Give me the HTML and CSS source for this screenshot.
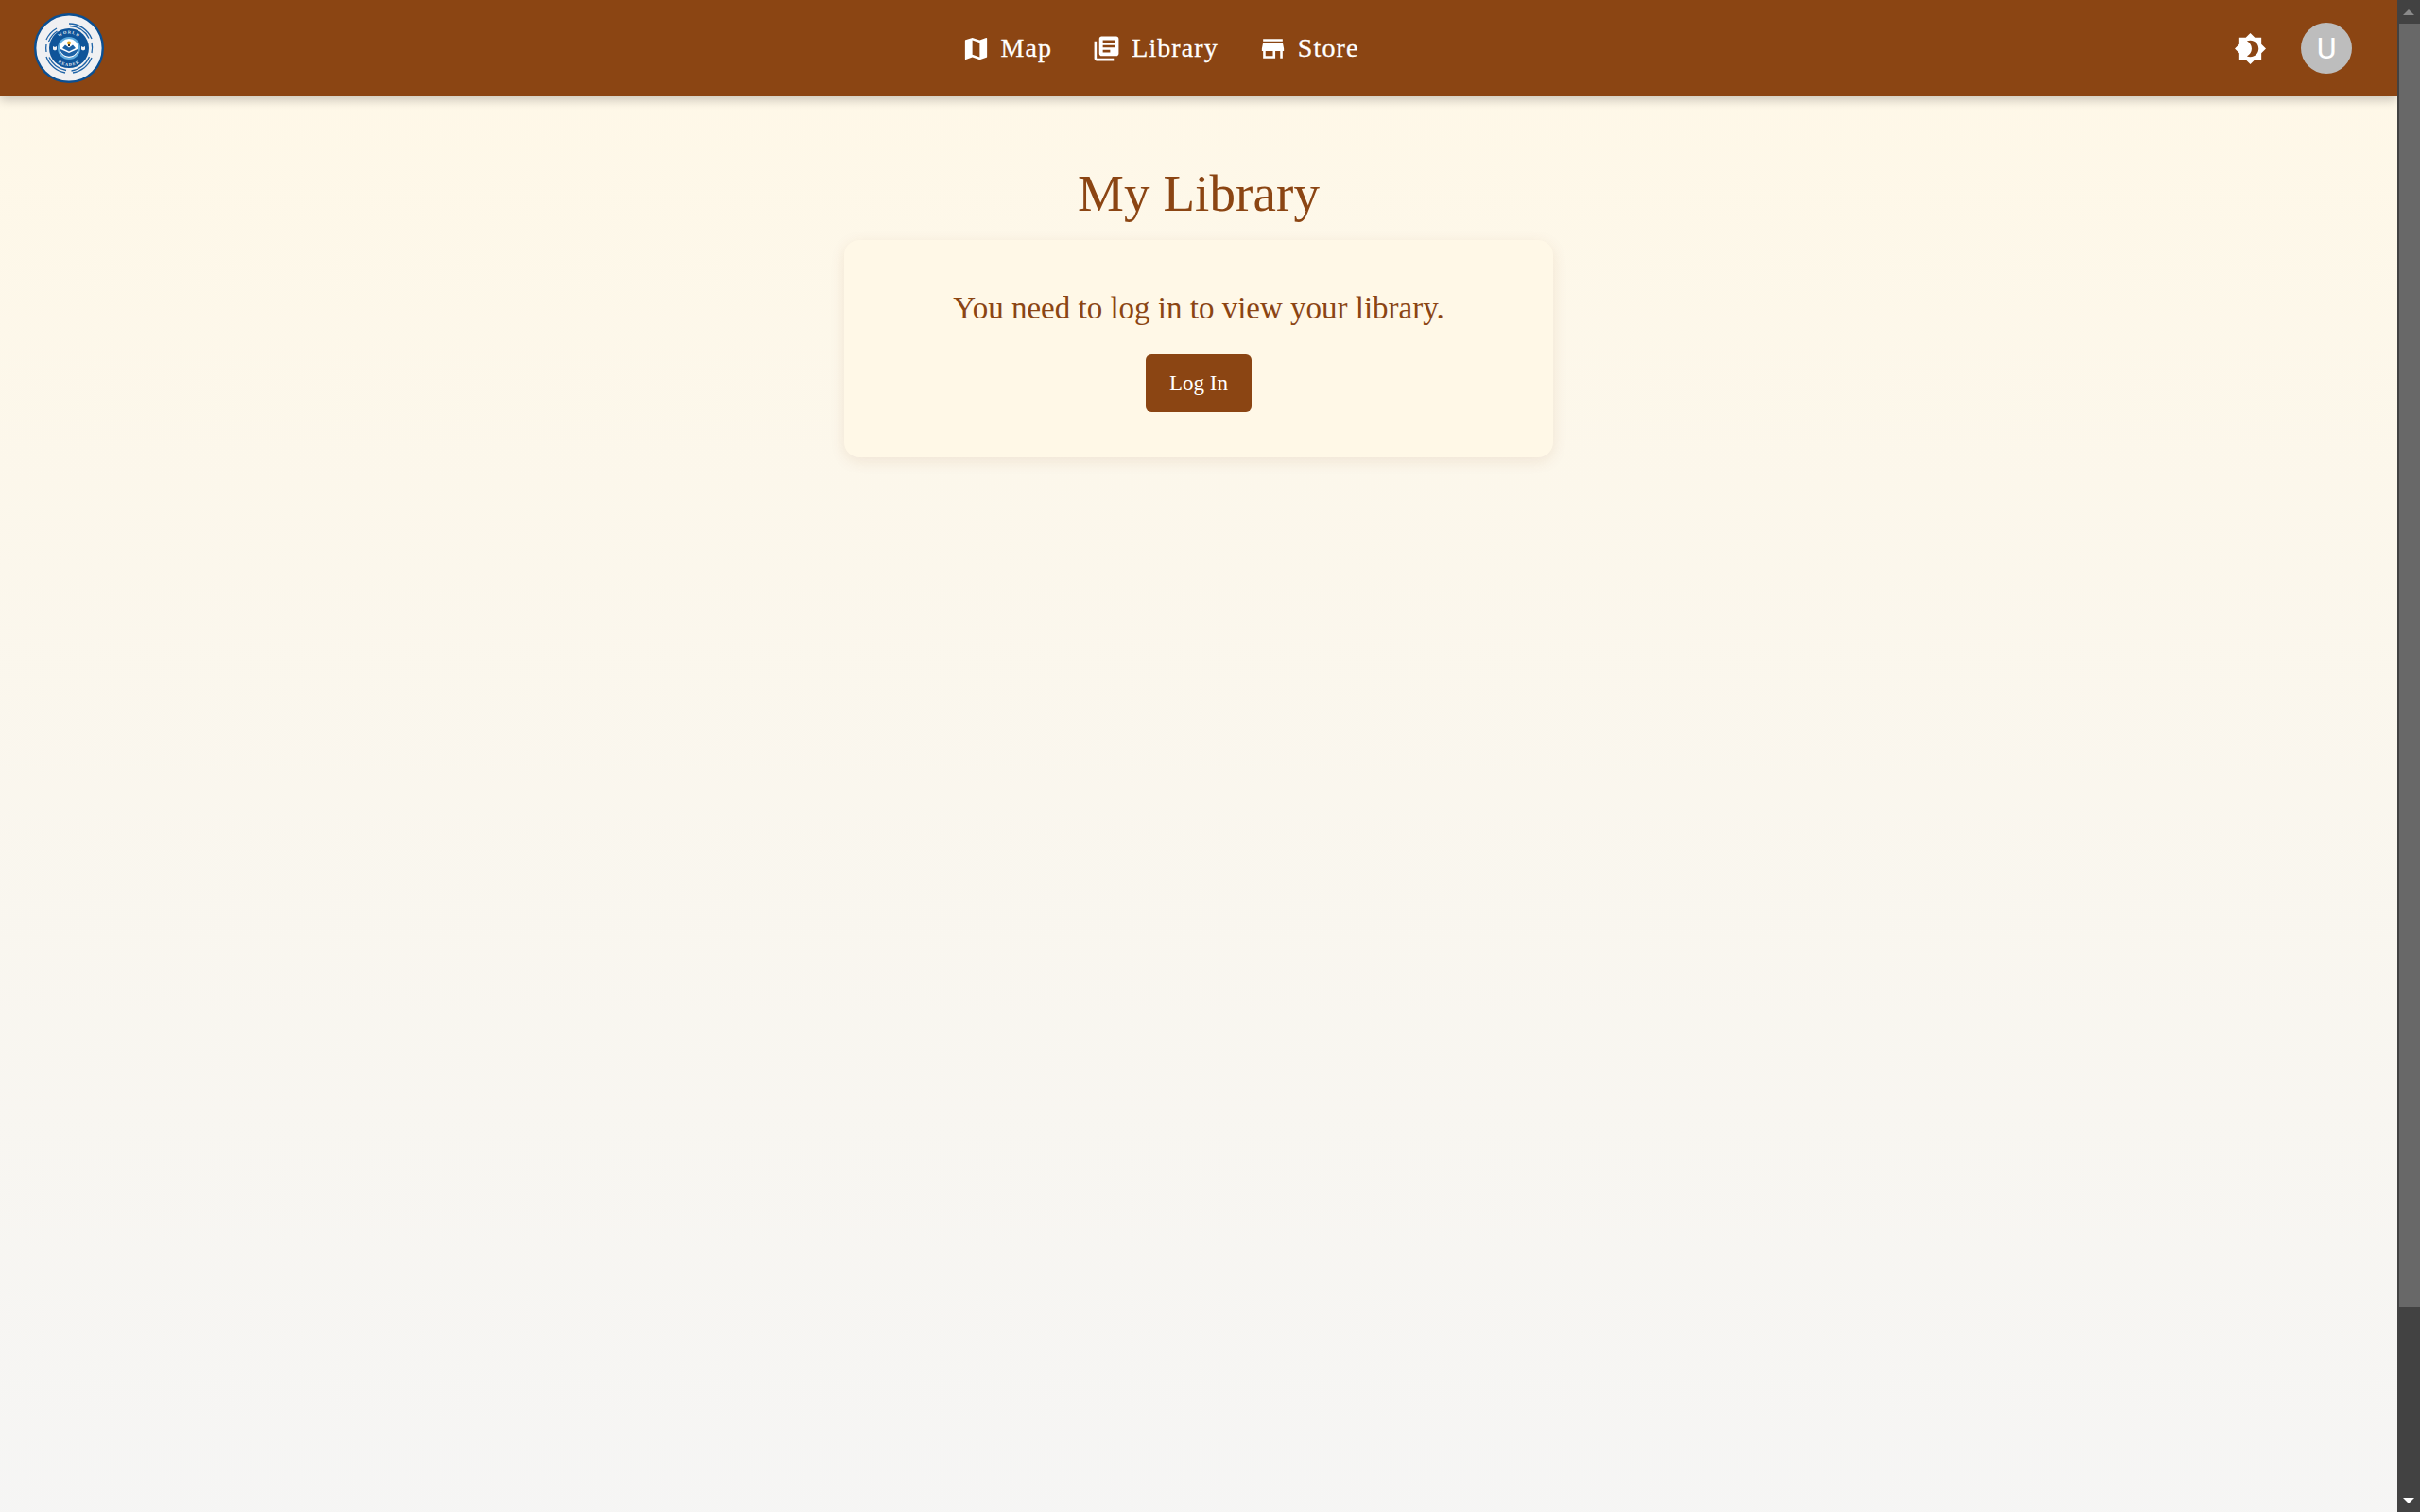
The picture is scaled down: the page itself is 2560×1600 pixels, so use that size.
FILE: index.html
```html
<!DOCTYPE html>
<html lang="en">
<head>
<meta charset="utf-8">
<title>My Library</title>
<link rel="stylesheet" href="styles.css">
</head>
<body>
<div class="window">
  <div class="app">
    <header class="topbar">
      <a class="logo" href="#" aria-label="World Reader">
        <svg viewBox="0 0 74 74" width="74" height="74">
          <defs>
            <path id="arcTop" d="M21.500 37a15.500 15.500 0 0 1 31 0"/>
            <path id="arcBottom" d="M18 37a19 19 0 0 0 38 0"/>
          </defs>
          <circle cx="37" cy="37" r="35.800" fill="#f0f0f2" stroke="#0b4f92" stroke-width="2.400"/>
          <g fill="none" stroke="#1d62a6" stroke-width="1.300">
            <path d="M37 11a26 26 0 0 1 24 16"/>
            <path d="M38 13.500a24 24 0 0 1 20 13"/>
            <path d="M13 28a26 26 0 0 1 11-12"/>
            <path d="M15.500 30a24 24 0 0 1 9-11"/>
            <path d="M61 47a26 26 0 0 1-20 16"/>
            <path d="M58.500 46a24 24 0 0 1-19 15"/>
            <path d="M33 63a26 26 0 0 1-20-17"/>
            <path d="M34 60.500a24 24 0 0 1-18-14"/>
            <path d="M61 31a25 25 0 0 1 0 11"/>
            <path d="M13 33a24 24 0 0 0 0 8"/>
          </g>
          <circle cx="37" cy="37" r="21" fill="#0f5499"/>
          <circle cx="37" cy="37" r="12" fill="#5da9dc"/>
          <circle cx="37" cy="37" r="10" fill="#fff"/>
          <path d="M28 38l9 4 9-4v2a10 10 0 0 1-18 0z" fill="#1d62a6"/>
          <path d="M30 37l7 3.500 7-3.500-3-3.500-4 3-4-3z" fill="#1d62a6"/>
          <circle cx="37" cy="31.500" r="2" fill="#e3a21a"/>
          <path d="M36 33h2v2h-2z" fill="#333"/>
          <path d="M20 35l2 1 2-1v3.500l-2 1-2-1zM50 35l2 1 2-1v3.500l-2 1-2-1z" fill="#f0f0f2"/>
          <text class="logo-text"><textPath href="#arcTop" startOffset="50%" text-anchor="middle">WORLD</textPath></text>
          <text class="logo-text"><textPath href="#arcBottom" startOffset="50%" text-anchor="middle">READER</textPath></text>
        </svg>
      </a>
      <nav class="nav">
        <a class="nav-link" href="#">
          <svg class="nav-icon" viewBox="0 0 24 24"><path d="M20.5 3l-.16.03L15 5.100 9 3 3.360 4.900c-.21.07-.36.25-.36.48V20.500c0 .28.22.5.5.5l.16-.03L9 18.900l6 2.100 5.640-1.900c.21-.07.36-.25.36-.48V3.500c0-.28-.22-.5-.5-.5zM15 19l-6-2.110V5l6 2.110V19z"/></svg>
          <span>Map</span>
        </a>
        <a class="nav-link" href="#">
          <svg class="nav-icon" viewBox="0 0 24 24"><path d="M4 6H2v14c0 1.100.9 2 2 2h14v-2H4V6zm16-4H8c-1.100 0-2 .9-2 2v12c0 1.100.9 2 2 2h12c1.100 0 2-.9 2-2V4c0-1.100-.9-2-2-2zm-1 9H9V9h10v2zm-4 4H9v-2h6v2zm4-8H9V5h10v2z"/></svg>
          <span>Library</span>
        </a>
        <a class="nav-link" href="#">
          <svg class="nav-icon" viewBox="0 0 24 24"><path d="M20 4H4v2h16V4zm1 10v-2l-1-5H4l-1 5v2h1v6h10v-6h4v6h2v-6h1zm-9 4H6v-4h6v4z"/></svg>
          <span>Store</span>
        </a>
      </nav>
      <div class="actions">
        <button class="theme-btn" type="button" aria-label="Toggle theme">
          <svg viewBox="0 0 24 24" width="35" height="35"><path d="M20 8.690V4h-4.690L12 .69 8.690 4H4v4.690L.69 12 4 15.310V20h4.690L12 23.310 15.310 20H20v-4.690L23.310 12 20 8.690zM12 18c-.89 0-1.740-.2-2.500-.55C11.560 16.500 13 14.420 13 12s-1.440-4.500-3.500-5.450C10.260 6.200 11.110 6 12 6c3.310 0 6 2.690 6 6s-2.690 6-6 6z"/></svg>
        </button>
        <div class="avatar">U</div>
      </div>
    </header>
    <main class="content">
      <h1 class="title">My Library</h1>
      <section class="card">
        <p class="message">You need to log in to view your library.</p>
        <button class="login" type="button">Log In</button>
      </section>
    </main>
  </div>
  <div class="scrollbar" aria-hidden="true">
    <div class="arrow-up"></div>
    <div class="thumb"></div>
    <div class="arrow-down"></div>
  </div>
</div>
</body>
</html>
```

FILE: styles.css
```css
* { box-sizing: border-box; }
html, body { margin: 0; height: 100%; overflow: hidden; }
body { font-family: "Liberation Serif", "Times New Roman", serif; color: #8b4513; }

.window { display: flex; width: 2560px; height: 1600px; }
.app {
  flex: 1;
  display: flex;
  flex-direction: column;
  background: linear-gradient(180deg, #fff8e7 0%, #f5f5f5 105%);
}

.topbar {
  height: 102px;
  flex: none;
  display: flex;
  align-items: center;
  justify-content: space-between;
  padding: 0 48px 0 36px;
  background: #8b4513;
  box-shadow: 0 4px 10px rgba(0, 0, 0, 0.2);
  position: relative;
}
.logo { display: block; width: 74px; height: 74px; }
.logo svg { display: block; }
.logo-text { font-size: 4.500px; font-weight: 700; letter-spacing: 1px; fill: #f0f0f2; font-family: "Liberation Serif", serif; }

.nav { display: flex; align-items: center; gap: 42px; margin-right: 19px; }
.nav-link { display: flex; align-items: center; gap: 11px; color: #fff; text-decoration: none; font-size: 28px; letter-spacing: 1.100px; -webkit-text-stroke: 0.3px #fff; }
.nav-icon { width: 31px; height: 31px; fill: #fff; flex: none; }

.actions { display: flex; align-items: center; gap: 36px; }
.theme-btn { display: block; padding: 0; width: 35px; height: 35px; border: 0; background: none; }
.theme-btn svg { display: block; fill: #fff; }
.avatar {
  width: 54px;
  height: 54px;
  border-radius: 50%;
  background: #bdbdbd;
  color: #fff;
  display: flex;
  align-items: center;
  justify-content: center;
  font-family: Roboto, sans-serif;
  font-size: 32px;
}

.content { display: flex; flex-direction: column; align-items: center; padding-top: 70px; }
.title { margin: 0 0 16px; font-size: 55px; line-height: 66px; font-weight: 400; letter-spacing: 0.100px; color: #8b4513; }
.card {
  width: 750px;
  height: 230px;
  padding: 48px 48px 0;
  display: flex;
  flex-direction: column;
  align-items: center;
  background: #fff8e7;
  border-radius: 16px;
  box-shadow: 0 4px 16px rgba(139, 69, 19, 0.1);
}
.message { margin: 0 0 25px; font-size: 33px; line-height: 48px; color: #8b4513; }
.login {
  width: 112px;
  height: 61px;
  border: 0;
  border-radius: 6px;
  background: #8b4513;
  color: #fff;
  font-family: inherit;
  font-size: 23px;
}

.scrollbar { flex: none; width: 24px; background: #424242; display: flex; flex-direction: column; align-items: flex-end; position: relative; }
.arrow-up { flex: none; height: 25px; width: 100%; position: relative; }
.arrow-up::after { content: ""; position: absolute; left: 6px; top: 10px; border: 6px solid transparent; border-top: 0; border-bottom-color: #8a8a8a; }
.thumb { flex: none; width: 22px; height: 1358px; background: #686868; }
.arrow-down { position: absolute; left: 6px; bottom: 9px; border: 6px solid transparent; border-bottom: 0; border-top-color: #fff; }
```
